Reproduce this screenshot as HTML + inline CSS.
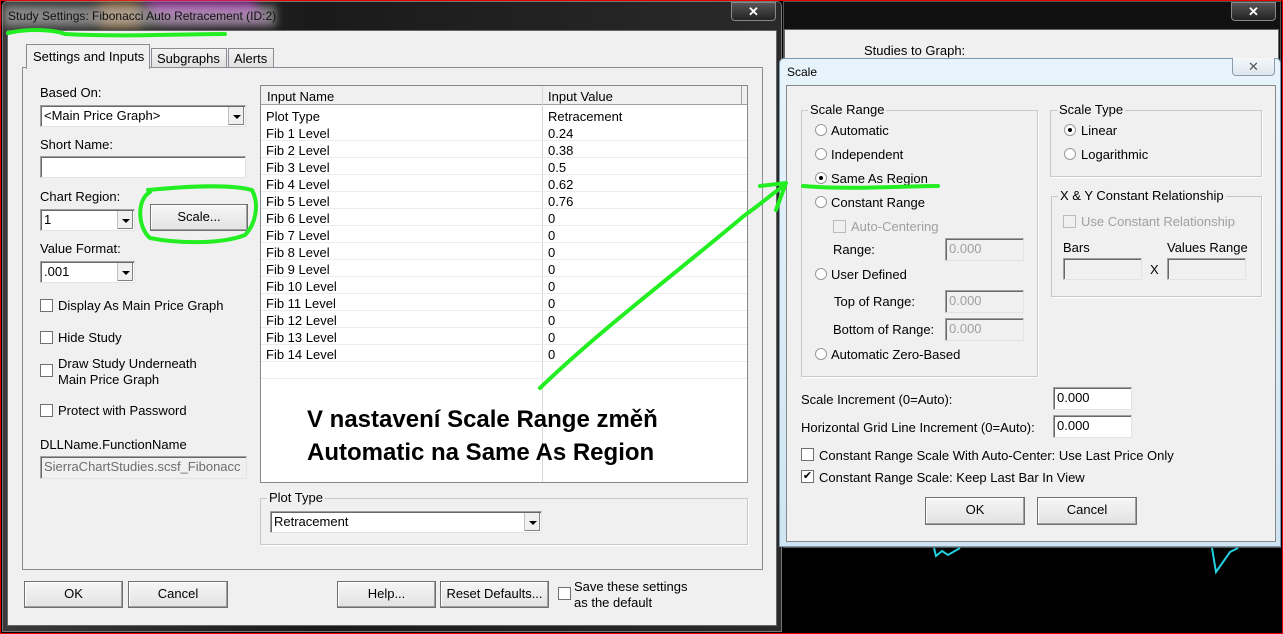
<!DOCTYPE html>
<html><head><meta charset="utf-8"><style>
*{box-sizing:border-box;margin:0;padding:0}
body{width:1283px;height:634px;background:#000;position:relative;overflow:hidden;font-family:"Liberation Sans",Arial,sans-serif;font-size:13px;color:#000}
.a{position:absolute;white-space:nowrap}
.btn{position:absolute;background:linear-gradient(#f6f6f6,#e2e2e2);border:1px solid #707070;box-shadow:inset -1px -1px 0 #a0a0a0,inset 1px 1px 0 #fff;text-align:center;line-height:24px}
.inp{position:absolute;background:#fff;border:1px solid #a0a0a0;border-right-color:#e3e3e3;border-bottom-color:#e3e3e3;box-shadow:inset 1px 1px 0 #696969;padding-left:3px;line-height:20px}
.dis{background:#f0f0f0;color:#8a8a8a}
.dd{position:absolute;right:1px;top:1px;bottom:1px;width:16px;background:#f0f0f0;border-left:1px solid #c0c0c0;box-shadow:inset -1px -1px 0 #808080}
.dd:after{content:"";position:absolute;left:4px;top:8px;border:4px solid transparent;border-top:4px solid #000;border-bottom:0}
.cb{position:absolute;width:13px;height:13px;background:#fff;border:1px solid #707070}
.rb{position:absolute;width:12px;height:12px;border-radius:50%;background:#fff;border:1px solid #999}
.rb.on:after{content:"";position:absolute;left:3px;top:3px;width:4px;height:4px;border-radius:50%;background:#000}
.grp{position:absolute;border:1px solid #c8c8c8;box-shadow:1px 1px 0 #fff}
.gl{position:absolute;top:-9px;left:6px;background:#f0f0f0;padding:0 2px}
</style></head><body>
<div class="a" style="left:0;top:0;width:1283px;height:634px;border:1px solid #e00000"></div>

<!-- LEFT DIALOG -->
<div class="a" style="left:2px;top:1px;width:780px;height:631px;background:linear-gradient(90deg,#3a3a3a,#1a1a1a 40%,#2a2a2a);border:1px solid #777;border-radius:5px 5px 0 0"></div>
<div class="a" style="left:100px;top:2px;width:40px;height:26px;background:#c88a40;opacity:.6;filter:blur(6px)"></div>
<div class="a" style="left:150px;top:0;width:110px;height:20px;background:#c030d0;opacity:.7;filter:blur(6px);transform:skew(30deg)"></div>
<div class="a" style="left:4px;top:6px;width:272px;height:20px;background:rgba(200,200,200,.55);filter:blur(4px)"></div>
<div class="a" style="left:8px;top:9px;font-size:12px;color:#111">Study Settings: Fibonacci Auto Retracement (ID:2)</div>
<div class="a" style="left:731px;top:2px;width:45px;height:19px;border:1px solid #888;border-radius:0 0 4px 4px;background:linear-gradient(#555,#222);color:#fff;text-align:center;font-weight:bold;line-height:17px">✕</div>
<div class="a" style="left:7px;top:30px;width:770px;height:596px;background:#f0f0f0;border:1px solid #666"></div>

<div class="a" style="left:22px;top:67px;width:741px;height:503px;border:1px solid #898c95;background:#f0f0f0"></div>
<div class="a" style="left:26px;top:44px;width:124px;height:25px;background:#f0f0f0;border:1px solid #898c95;border-bottom:none;padding:4px 0 0 6px">Settings and Inputs</div>
<div class="a" style="left:151px;top:48px;width:76px;height:20px;background:linear-gradient(#f4f4f4,#e0e0e0);border:1px solid #898c95;padding:2px 0 0 5px">Subgraphs</div>
<div class="a" style="left:228px;top:48px;width:46px;height:20px;background:linear-gradient(#f4f4f4,#e0e0e0);border:1px solid #898c95;padding:2px 0 0 5px">Alerts</div>

<div class="a" style="left:40px;top:85px">Based On:</div>
<div class="inp" style="left:40px;top:105px;width:206px;height:22px">&lt;Main Price Graph&gt;<div class="dd"></div></div>
<div class="a" style="left:40px;top:137px">Short Name:</div>
<div class="inp" style="left:40px;top:156px;width:206px;height:22px"></div>
<div class="a" style="left:40px;top:189px">Chart Region:</div>
<div class="inp" style="left:40px;top:209px;width:95px;height:22px">1<div class="dd"></div></div>
<div class="btn" style="left:150px;top:204px;width:98px;height:27px">Scale...</div>
<div class="a" style="left:40px;top:241px">Value Format:</div>
<div class="inp" style="left:40px;top:261px;width:95px;height:22px">.001<div class="dd"></div></div>
<div class="cb" style="left:40px;top:299px"></div><div class="a" style="left:58px;top:298px">Display As Main Price Graph</div>
<div class="cb" style="left:40px;top:331px"></div><div class="a" style="left:58px;top:330px">Hide Study</div>
<div class="cb" style="left:40px;top:364px"></div><div class="a" style="left:58px;top:356px;line-height:16px">Draw Study Underneath<br>Main Price Graph</div>
<div class="cb" style="left:40px;top:404px"></div><div class="a" style="left:58px;top:403px">Protect with Password</div>
<div class="a" style="left:40px;top:437px">DLLName.FunctionName</div>
<div class="inp dis" style="left:40px;top:456px;width:207px;height:23px;overflow:hidden;color:#6d6d6d">SierraChartStudies.scsf_Fibonacc</div>

<div class="a" style="left:260px;top:85px;width:488px;height:398px;background:#fff;border:1px solid #828790;overflow:hidden">
 <div class="a" style="left:0;top:0;width:488px;height:19px;background:#f0f0f0;border-bottom:1px solid #a0a0a0"></div>
 <div class="a" style="left:6px;top:3px">Input Name</div>
 <div class="a" style="left:281px;top:0;width:1px;height:398px;background:#d8d8d8"></div>
 <div class="a" style="left:287px;top:3px">Input Value</div>
 <div class="a" style="left:480px;top:0;width:1px;height:19px;background:#a0a0a0"></div>
 <div class="a" style="left:5px;top:22px;line-height:17px">Plot Type<br>Fib 1 Level<br>Fib 2 Level<br>Fib 3 Level<br>Fib 4 Level<br>Fib 5 Level<br>Fib 6 Level<br>Fib 7 Level<br>Fib 8 Level<br>Fib 9 Level<br>Fib 10 Level<br>Fib 11 Level<br>Fib 12 Level<br>Fib 13 Level<br>Fib 14 Level</div>
 <div class="a" style="left:287px;top:22px;line-height:17px">Retracement<br>0.24<br>0.38<br>0.5<br>0.62<br>0.76<br>0<br>0<br>0<br>0<br>0<br>0<br>0<br>0<br>0</div>
 <div class="a" style="left:0;top:38px;width:488px;height:256px;background:repeating-linear-gradient(transparent 0 16px,#ececec 16px 17px)"></div>
</div>
<div class="a" style="left:307px;top:403px;font-size:24px;font-weight:bold;line-height:33px;color:#000">V nastavení Scale Range změň<br>Automatic na Same As Region</div>

<div class="grp" style="left:260px;top:498px;width:488px;height:47px"><div class="gl">Plot Type</div></div>
<div class="inp" style="left:270px;top:511px;width:272px;height:22px">Retracement<div class="dd"></div></div>

<div class="btn" style="left:24px;top:581px;width:99px;height:27px">OK</div>
<div class="btn" style="left:128px;top:581px;width:100px;height:27px">Cancel</div>
<div class="btn" style="left:337px;top:581px;width:99px;height:27px">Help...</div>
<div class="btn" style="left:440px;top:581px;width:109px;height:27px">Reset Defaults...</div>
<div class="cb" style="left:558px;top:587px"></div>
<div class="a" style="left:574px;top:579px;line-height:16px">Save these settings<br>as the default</div>

<!-- RIGHT BACKGROUND WINDOW -->
<div class="a" style="left:783px;top:1px;width:498px;height:547px;background:#111;border:1px solid #555"></div>
<div class="a" style="left:1231px;top:2px;width:45px;height:19px;border:1px solid #888;border-radius:0 0 4px 4px;background:linear-gradient(#555,#222);color:#fff;text-align:center;font-weight:bold;line-height:17px">✕</div>
<div class="a" style="left:784px;top:29px;width:495px;height:518px;background:#f0f0f0;border:1px solid #666"></div>
<div class="a" style="left:864px;top:43px">Studies to Graph:</div>
<svg class="a" style="left:0;top:0" width="1283" height="634"><polyline points="1212,548 1216,572 1230,552 1238,548" fill="none" stroke="#22d0e0" stroke-width="2"/><polyline points="934,548 936,556 942,551 948,555 960,548" fill="none" stroke="#22d0e0" stroke-width="2"/></svg>

<!-- SCALE DIALOG -->
<div class="a" style="left:779px;top:58px;width:502px;height:489px;background:linear-gradient(#e8f4fb,#cfe4f2);border:1px solid #7a9ab0;border-radius:5px 5px 0 0"></div>
<div class="a" style="left:787px;top:65px;font-size:12px">Scale</div>
<div class="a" style="left:1232px;top:58px;width:43px;height:18px;border:1px solid #8a9aa8;border-top:none;border-radius:0 0 4px 4px;background:linear-gradient(#f4f8fb,#dde6ee);color:#555;text-align:center;line-height:17px;font-size:13px">✕</div>
<div class="a" style="left:786px;top:85px;width:490px;height:457px;background:#f0f0f0;border:1px solid #888"></div>

<div class="grp" style="left:801px;top:110px;width:237px;height:267px"><div class="gl">Scale Range</div></div>
<div class="rb" style="left:815px;top:124px"></div><div class="a" style="left:831px;top:123px">Automatic</div>
<div class="rb" style="left:815px;top:148px"></div><div class="a" style="left:831px;top:147px">Independent</div>
<div class="rb on" style="left:815px;top:172px"></div><div class="a" style="left:831px;top:171px">Same As Region</div>
<div class="rb" style="left:815px;top:196px"></div><div class="a" style="left:831px;top:195px">Constant Range</div>
<div class="cb" style="left:833px;top:220px;border-color:#bbb;background:#f0f0f0"></div><div class="a" style="left:851px;top:219px;color:#a0a0a0">Auto-Centering</div>
<div class="a" style="left:833px;top:242px">Range:</div>
<div class="inp dis" style="left:945px;top:238px;width:79px;height:23px;color:#a0a0a0">0.000</div>
<div class="rb" style="left:815px;top:268px"></div><div class="a" style="left:831px;top:267px">User Defined</div>
<div class="a" style="left:834px;top:294px">Top of Range:</div>
<div class="inp dis" style="left:945px;top:290px;width:79px;height:23px;color:#a0a0a0">0.000</div>
<div class="a" style="left:833px;top:322px">Bottom of Range:</div>
<div class="inp dis" style="left:945px;top:318px;width:79px;height:23px;color:#a0a0a0">0.000</div>
<div class="rb" style="left:815px;top:348px"></div><div class="a" style="left:831px;top:347px">Automatic Zero-Based</div>

<div class="grp" style="left:1050px;top:110px;width:212px;height:67px"><div class="gl">Scale Type</div></div>
<div class="rb on" style="left:1064px;top:124px"></div><div class="a" style="left:1081px;top:123px">Linear</div>
<div class="rb" style="left:1064px;top:148px"></div><div class="a" style="left:1081px;top:147px">Logarithmic</div>

<div class="grp" style="left:1051px;top:196px;width:211px;height:101px"><div class="gl">X &amp; Y Constant Relationship</div></div>
<div class="cb" style="left:1063px;top:215px;border-color:#bbb;background:#f0f0f0"></div><div class="a" style="left:1081px;top:214px;color:#a0a0a0">Use Constant Relationship</div>
<div class="a" style="left:1063px;top:240px">Bars</div>
<div class="a" style="left:1167px;top:240px">Values Range</div>
<div class="inp dis" style="left:1063px;top:258px;width:79px;height:22px"></div>
<div class="a" style="left:1150px;top:262px">X</div>
<div class="inp dis" style="left:1167px;top:258px;width:79px;height:22px"></div>

<div class="a" style="left:801px;top:392px">Scale Increment (0=Auto):</div>
<div class="inp" style="left:1053px;top:387px;width:79px;height:23px">0.000</div>
<div class="a" style="left:801px;top:420px">Horizontal Grid Line Increment (0=Auto):</div>
<div class="inp" style="left:1053px;top:415px;width:79px;height:23px">0.000</div>
<div class="cb" style="left:801px;top:448px"></div><div class="a" style="left:819px;top:448px">Constant Range Scale With Auto-Center: Use Last Price Only</div>
<div class="cb" style="left:801px;top:470px;font-size:11px;line-height:11px;text-align:center">✔</div><div class="a" style="left:819px;top:470px">Constant Range Scale: Keep Last Bar In View</div>
<div class="btn" style="left:925px;top:497px;width:100px;height:28px">OK</div>
<div class="btn" style="left:1037px;top:497px;width:100px;height:28px">Cancel</div>

<svg class="a" style="left:0;top:0" width="1283" height="634" fill="none" stroke="#22ee22" stroke-width="4" stroke-linecap="round" stroke-linejoin="round">
<path d="M8,33 C30,28 55,30 65,34 C120,37 180,34 225,34"/>
<path d="M148,190 C190,186 230,184 252,190 C260,205 255,225 245,235 C220,245 175,243 150,238 C138,228 136,200 150,192"/>
<path d="M540,388 C600,330 680,270 745,215 C760,205 770,195 785,185"/>
<path d="M760,186 L786,183 L776,210"/>
<path d="M803,186 C850,190 900,186 938,186"/>
</svg>
</body></html>
